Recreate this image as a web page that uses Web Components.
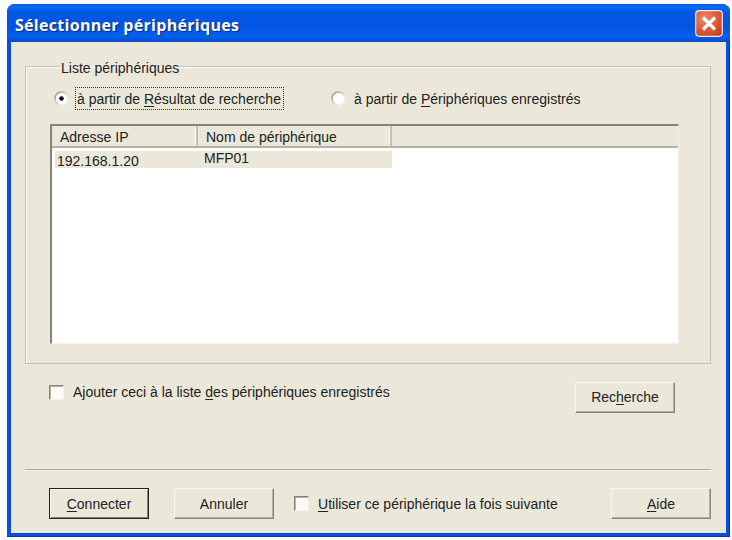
<!DOCTYPE html>
<html lang="fr"><head><meta charset="utf-8"><title>Sélectionner périphériques</title>
<style>
html,body{margin:0;padding:0;background:#fff}
body{width:732px;height:540px;overflow:hidden;font:14px/16px "Liberation Sans",Arial,sans-serif;color:#222}
u{text-underline-offset:2px}
</style></head><body>
<xp-window>
  <span slot="title">Sélectionner périphériques</span>
  <xp-group label="Liste périphériques">
    <div style="display:flex;height:24px;align-items:center;padding-left:4px">
      <xp-radio checked focused style="width:277px"><span>à partir de <u>R</u>ésultat de recherche</span></xp-radio>
      <xp-radio><span>à partir de <u>P</u>ériphériques enregistrés</span></xp-radio>
    </div>
    <xp-list></xp-list>
  </xp-group>
  <div style="display:flex;align-items:flex-start;padding:18px 36px 0 24px;height:105px;box-sizing:border-box">
    <xp-check style="margin-top:2px"><span>Ajouter ceci à la liste <u>d</u>es périphériques enregistrés</span></xp-check>
    <xp-button style="margin-left:auto"><span style="margin-top:-2px">Rec<u>h</u>erche</span></xp-button>
  </div>
  <div style="height:1px;background:#aca899;box-shadow:0 1px 0 #fff8"></div>
  <div style="display:flex;align-items:center;padding:18px 0 0 24px">
    <xp-button default><u>C</u>onnecter</xp-button>
    <xp-button style="margin-left:25px">Annuler</xp-button>
    <xp-check style="margin-left:20px"><span><u>U</u>tiliser ce périphérique la fois suivante</span></xp-check>
    <xp-button style="margin-left:auto"><u>A</u>ide</xp-button>
  </div>
</xp-window>
<script>
function tpl(css,html){return `<style>${css}</style>${html}`}
class Base extends HTMLElement{
  connectedCallback(){ if(!this.shadowRoot){this.attachShadow({mode:'open'}).innerHTML=this.render()} }
}
customElements.define('xp-close',class extends Base{render(){return tpl(`
 :host{display:block;width:28px;height:27px;flex:none}
 svg{display:block}`,`<svg width="28" height="27" viewBox="0 0 28 27" aria-label="Fermer">
 <defs><radialGradient id="r" cx="35%" cy="30%" r="85%"><stop offset="0" stop-color="#ea8a6c"/><stop offset=".55" stop-color="#de5a34"/><stop offset="1" stop-color="#c23c1c"/></radialGradient></defs>
 <rect x=".7" y=".7" width="26.6" height="25.6" rx="3.5" fill="url(#r)" stroke="#e8e8f0" stroke-width="1.2"/>
 <path d="M8 7.5L20 19.5M20 7.5L8 19.5" stroke="#fff" stroke-width="3.2" fill="none"/></svg>`)}});
customElements.define('xp-window',class extends Base{render(){return tpl(`
 :host{display:block;width:723px;height:533px;margin:4px 0 0 7px;box-sizing:border-box;border-radius:8px 8px 0 0;
   background:#0a4fe0;box-shadow:inset -1px -1px 0 #0a36a8;overflow:hidden}
 .title{height:38px;display:flex;align-items:center;box-sizing:border-box;padding:0 7px 0 8px;
   background:linear-gradient(180deg,#0a5ee6 0,#0a6af2 8%,#0458e4 22%,#0254e2 60%,#0560ee 85%,#0349c8 100%);
   font:bold 16px/20px "Open Sans","DejaVu Sans",sans-serif;color:#fff;letter-spacing:.3px;text-shadow:1px 1px 1px #0a2a80}
 ::slotted(span){flex:1;padding-top:3px}
 .client{margin:0 4px 4px 4px;background:#ebe8da;height:491px;padding:16px 15px 0 14px;box-sizing:border-box}
 `,`<div class="title"><slot name="title"></slot><xp-close></xp-close></div><div class="client"><slot></slot></div>`)}});
customElements.define('xp-group',class extends Base{render(){return tpl(`
 :host{display:block}
 fieldset{margin:0;padding:12px 31px 0 24px;height:306px;box-sizing:border-box;border:1px solid #c4c1b2;box-shadow:1px 1px 0 #fff inset}
 legend{padding:0 1px;margin-left:10px;line-height:16px;color:#222;position:relative;top:2px}
 `,`<fieldset><legend>${this.getAttribute('label')}</legend><slot></slot></fieldset>`)}});
customElements.define('xp-radio',class extends Base{render(){const c=this.hasAttribute('checked'),f=this.hasAttribute('focused');return tpl(`
 :host{display:inline-flex;align-items:center;gap:7px;box-sizing:border-box}
 svg{flex:none;display:block}
 .t{padding:3px 2px 2px 1px;white-space:nowrap;${f?'outline:1px dotted #333;':''}}
 `,`<svg width="15" height="15" viewBox="0 0 15 15"><defs><linearGradient id="g" x1="0" y1="0" x2="1" y2="1"><stop offset="0" stop-color="#8f8d82"/><stop offset=".5" stop-color="#d8d5c7"/><stop offset="1" stop-color="#fff"/></linearGradient></defs>
 <circle cx="7.5" cy="7.5" r="6.5" fill="#fff" stroke="url(#g)" stroke-width="1.6"/>${c?'<circle cx="7.5" cy="7.5" r="2.3" fill="#111"/>':''}</svg><span class="t"><slot></slot></span>`)}});
customElements.define('xp-check',class extends Base{render(){return tpl(`
 :host{display:inline-flex;align-items:center;gap:9px}
 .b{flex:none;width:15px;height:15px;box-sizing:border-box;background:#fbfaf5;border:1px solid;border-color:#85837a #f4f2e8 #f4f2e8 #85837a;box-shadow:inset 1px 1px 0 #b5b2a4}
 .t{white-space:nowrap}
 `,`<span class="b"></span><span class="t"><slot></slot></span>`)}});
customElements.define('xp-button',class extends Base{render(){const d=this.hasAttribute('default');return tpl(`
 :host{display:inline-flex;flex:none;width:100px;height:31px;box-sizing:border-box;align-items:center;justify-content:center;
  background:#ebe8da;white-space:nowrap;
  border:1px solid;border-color:${d?'#222':'#f8f7f0 #85837a #85837a #f8f7f0'};
  box-shadow:${d?'inset 1px 1px 0 #fbfaf5,inset -1px -1px 0 #85837a':'inset -1px -1px 0 #b5b2a4'}}
 `,`<slot></slot>`)}});
customElements.define('xp-list',class extends Base{render(){return tpl(`
 :host{display:block;height:220px;margin-top:14px;box-sizing:border-box;background:#fff;border-top:2px solid #85837a;border-left:2px solid #85837a;border-bottom:1px solid #f4f2e8;border-right:1px solid #f4f2e8;overflow:hidden}
 .head{display:grid;grid-template-columns:146px 194px 1fr;height:20px;background:#ebe8da;border-bottom:2px solid #b5b2a4}
 .head span{padding:3px 0 0 8px;border-right:2px solid #c4c1b2;box-shadow:inset -1px 0 0 #fff;line-height:16px}
 .head span:last-child{border:0;box-shadow:none}
 .row{display:grid;grid-template-columns:146px 191px;margin:3px 0 0 3px;width:337px;height:17px;background:#ebe8da;line-height:16px}
 .row span{padding:2px 0 0 2px}
 .row span+span{padding:0 0 0 3px;margin-top:-1px}
 `,`<div class="head"><span>Adresse IP</span><span>Nom de périphérique</span><span></span></div>
 <div class="row"><span>192.168.1.20</span><span>MFP01</span></div>`)}});
</script>
</body></html>
